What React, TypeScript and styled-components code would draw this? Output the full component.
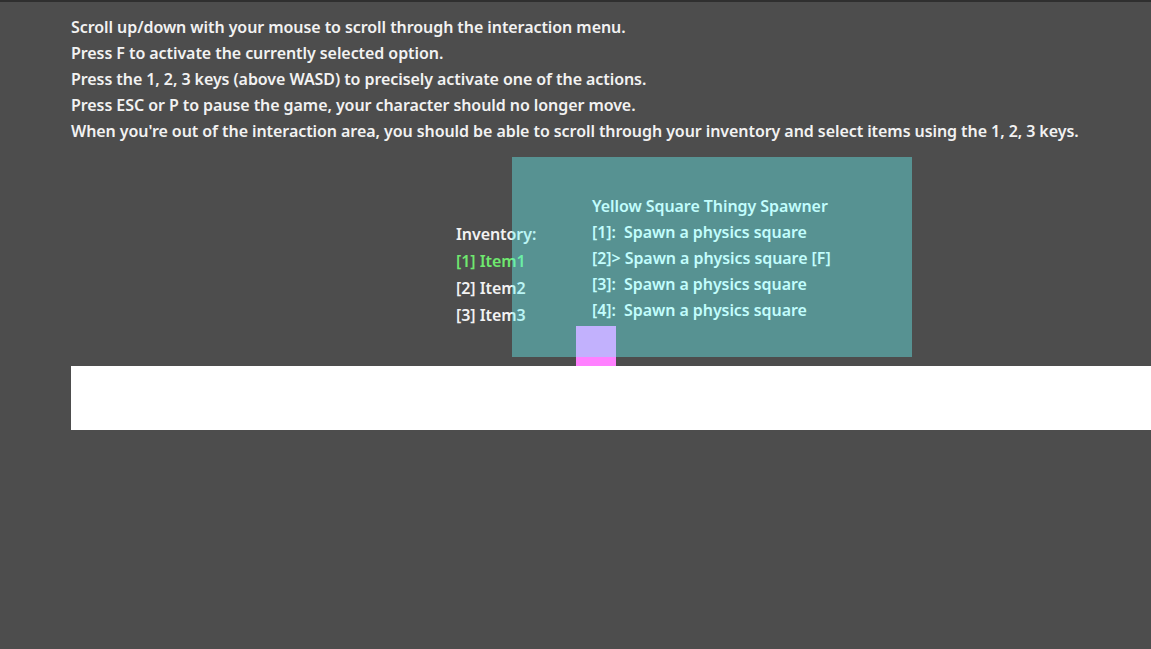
import styled, { createGlobalStyle } from 'styled-components';

const GlobalStyle = createGlobalStyle`
  html, body {
    margin: 0;
    padding: 0;
    background: #4d4d4d;
  }
  body {
    font-family: "Noto Sans", "Open Sans", sans-serif;
    font-weight: 600;
    font-size: 16px;
    letter-spacing: -0.07px;
  }
`;

const Screen = styled.div`
  width: 1151px;
  height: 649px;
  box-sizing: border-box;
  border-top: 2px solid #2f2f2f;
  background: #4d4d4d;
  padding: 12px 0 0 71px;
  overflow: hidden;
`;

const Help = styled.div`
  display: flex;
  flex-direction: column;
  color: #f2f2f2;
  line-height: 26px;
  white-space: nowrap;
`;

const Scene = styled.div`
  position: relative;
  padding-top: 77px;
`;

const Inventory = styled.div`
  margin-left: 385px;
  display: flex;
  flex-direction: column;
  line-height: 27px;
  color: #f2f2f2;
`;

const Slot = styled.span<{ $active?: boolean }>`
  color: ${(p) => (p.$active ? '#6fe86f' : '#f2f2f2')};
`;

const PhysicsSquare = styled.div`
  position: absolute;
  left: 505px;
  top: 182px;
  width: 40px;
  height: 40px;
  background: #ff80ff;
`;

const InteractionPanel = styled.div`
  position: absolute;
  left: 441px;
  top: 13px;
  width: 400px;
  height: 200px;
  box-sizing: border-box;
  padding: 36px 0 0 80px;
  background: rgba(102, 250, 250, 0.4);
  display: flex;
  flex-direction: column;
  line-height: 26px;
  color: #c2fdfd;
  white-space: pre;
`;

const Floor = styled.div`
  margin-top: 37px;
  height: 64px;
  background: #ffffff;
`;

const helpLines = [
  'Scroll up/down with your mouse to scroll through the interaction menu.',
  'Press F to activate the currently selected option.',
  'Press the 1, 2, 3 keys (above WASD) to precisely activate one of the actions.',
  'Press ESC or P to pause the game, your character should no longer move.',
  "When you're out of the interaction area, you should be able to scroll through your inventory and select items using the 1, 2, 3 keys.",
];

const actions = [
  '[1]:  Spawn a physics square',
  '[2]> Spawn a physics square [F]',
  '[3]:  Spawn a physics square',
  '[4]:  Spawn a physics square',
];

const items = ['Item1', 'Item2', 'Item3'];

export default function App() {
  return (
    <>
      <GlobalStyle />
      <Screen>
        <Help>
          {helpLines.map((line) => (
            <span key={line}>{line}</span>
          ))}
        </Help>
        <Scene>
          <Inventory>
            <span>Inventory:</span>
            {items.map((item, i) => (
              <Slot key={item} $active={i === 0}>
                [{i + 1}] {item}
              </Slot>
            ))}
          </Inventory>
          <PhysicsSquare />
          <InteractionPanel>
            <span>Yellow Square Thingy Spawner</span>
            {actions.map((a) => (
              <span key={a}>{a}</span>
            ))}
          </InteractionPanel>
          <Floor />
        </Scene>
      </Screen>
    </>
  );
}
